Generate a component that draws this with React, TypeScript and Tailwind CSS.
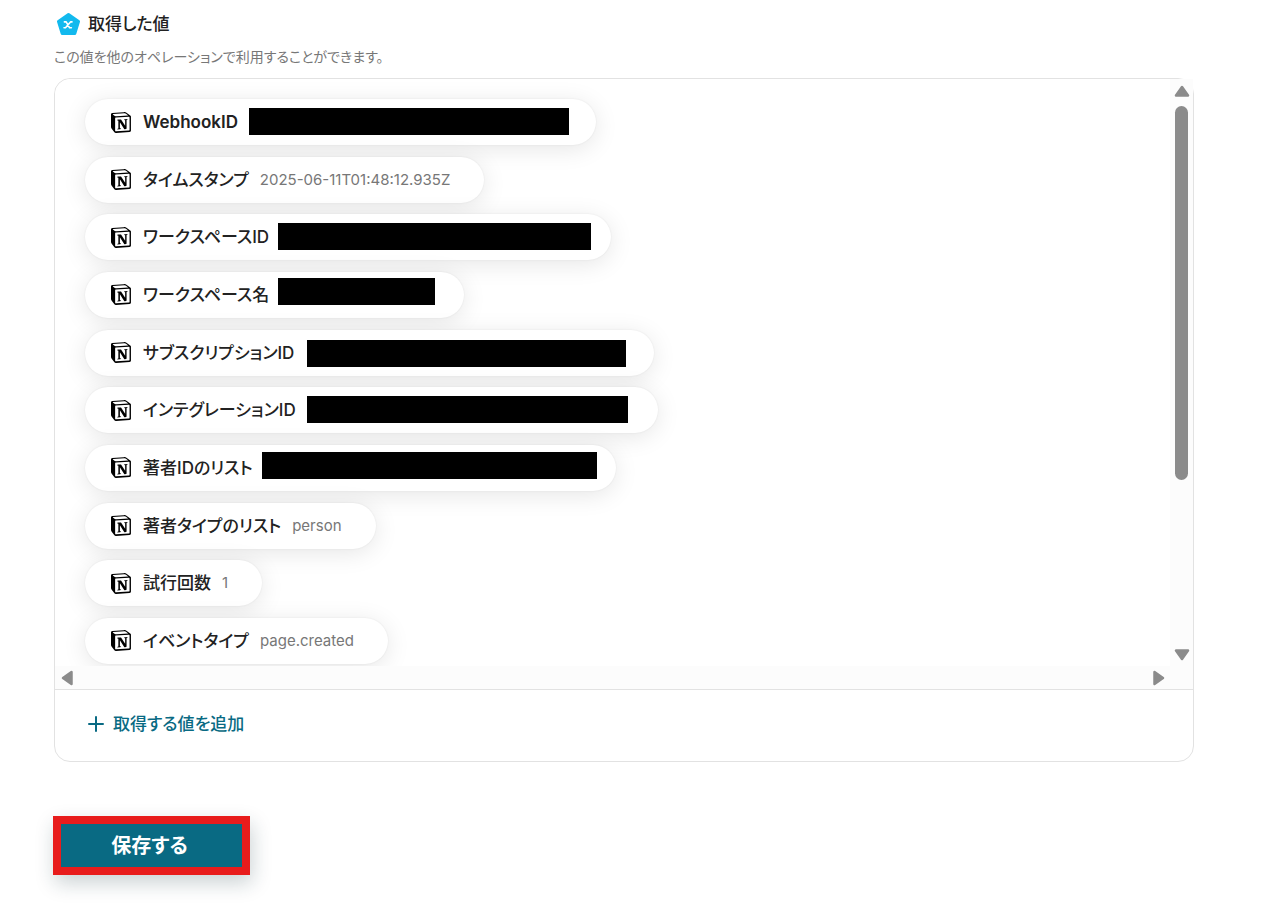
type Value = {
  label: string;
  value?: string;
  pill?: string;
  mask?: string;
};

const values: Value[] = [
  { label: "WebhookID", pill: "w-[511px] font-semibold", mask: "left-[164px] top-[9px] w-[320px]" },
  { label: "タイムスタンプ", value: "2025-06-11T01:48:12.935Z" },
  { label: "ワークスペースID", pill: "w-[526px]", mask: "left-[193px] top-[9px] w-[313px]" },
  { label: "ワークスペース名", pill: "w-[379px]", mask: "left-[193px] top-[6px] w-[157px]" },
  { label: "サブスクリプションID", pill: "w-[569px]", mask: "left-[222px] top-[10px] w-[319px]" },
  { label: "インテグレーションID", pill: "w-[573px]", mask: "left-[222px] top-[9px] w-[321px]" },
  { label: "著者IDのリスト", pill: "w-[531px]", mask: "left-[177px] top-[7px] w-[335px]" },
  { label: "著者タイプのリスト", value: "person" },
  { label: "試行回数", value: "1" },
  { label: "イベントタイプ", value: "page.created" },
];

function NotionIcon() {
  return (
    <svg viewBox="0 0 96 100" className="h-[21px] w-5 shrink-0" aria-hidden="true">
      <path
        fill="#fff"
        d="M6.017 4.313l55.333 -4.087c6.797 -0.583 8.543 -0.19 12.817 2.917l17.663 12.443c2.913 2.14 3.883 2.723 3.883 5.053v68.243c0 4.277 -1.553 6.807 -6.99 7.193L24.467 99.967c-4.08 0.193 -6.023 -0.39 -8.16 -3.113L3.3 79.94c-2.333 -3.113 -3.3 -5.443 -3.3 -8.167V11.113c0 -3.497 1.553 -6.413 6.017 -6.8z"
      />
      <path
        fill="#000"
        fillRule="evenodd"
        d="M61.35 0.227l-55.333 4.087C1.553 4.7 0 7.617 0 11.113v60.66c0 2.723 0.967 5.053 3.3 8.167l13.007 16.913c2.137 2.723 4.08 3.307 8.16 3.113l64.257 -3.89c5.433 -0.387 6.99 -2.917 6.99 -7.193V20.64c0 -2.21 -0.873 -2.847 -3.443 -4.733L74.167 3.143c-4.273 -3.107 -6.02 -3.5 -12.817 -2.917zM25.92 19.523c-5.247 0.353 -6.437 0.433 -9.417 -1.99L8.927 11.507c-0.77 -0.78 -0.383 -1.753 1.557 -1.947l53.193 -3.887c4.467 -0.39 6.793 1.167 8.54 2.527l9.123 6.61c0.39 0.197 1.36 1.36 0.193 1.36l-54.933 3.307 -0.68 0.047zM19.803 88.3V30.367c0 -2.53 0.777 -3.697 3.103 -3.893L86 22.78c2.14 -0.193 3.107 1.167 3.107 3.693v57.547c0 2.53 -0.39 4.67 -3.883 4.863l-60.377 3.5c-3.493 0.193 -5.043 -0.97 -5.043 -4.083zm59.6 -54.827c0.387 1.75 0 3.5 -1.75 3.7l-2.91 0.577v42.773c-2.527 1.36 -4.853 2.137 -6.797 2.137 -3.107 0 -3.883 -0.973 -6.21 -3.887l-19.03 -29.94v28.967l6.02 1.363s0 3.5 -4.857 3.5l-13.39 0.777c-0.39 -0.78 0 -2.723 1.357 -3.11l3.497 -0.97v-38.3L30.48 40.667c-0.39 -1.75 0.58 -4.277 3.3 -4.473l14.367 -0.967 19.8 30.327v-26.83l-5.047 -0.58c-0.39 -2.143 1.163 -3.7 3.103 -3.89l13.4 -0.78z"
      />
    </svg>
  );
}

function VariableIcon() {
  return (
    <svg viewBox="0 0 24 24" className="size-6 shrink-0" aria-hidden="true">
      <path
        d="M12.5 2.6 22.5 9.6 18.8 21.5H6.2L2.5 9.6Z"
        fill="#12b9ee"
        stroke="#12b9ee"
        strokeWidth="3"
        strokeLinejoin="round"
      />
      <path
        d="M8.4 9.9H10.2L13.6 15.8H15.4M16 9.9H14.5L9.5 15.8H8"
        fill="none"
        stroke="#fff"
        strokeWidth="1.6"
        strokeLinecap="round"
        strokeLinejoin="round"
      />
    </svg>
  );
}

function Arrow({ className }: { className: string }) {
  return (
    <svg viewBox="0 0 16 12" className={className} aria-hidden="true">
      <path d="M8 2 14 10.5H2Z" fill="#8b8b8b" stroke="#8b8b8b" strokeWidth="2.5" strokeLinejoin="round" />
    </svg>
  );
}

function Pill({ item }: { item: Value }) {
  return (
    <li
      className={`relative flex h-[46px] items-center rounded-full bg-white pr-[34px] pl-[26px] shadow-[0_0_2px_rgba(0,0,0,0.08),0_4px_24px_rgba(0,0,0,0.1)] ${item.pill ?? ""}`}
    >
      <NotionIcon />
      <span
        className={`ml-3 text-[17px] leading-6 whitespace-nowrap text-[#222] ${item.label === "WebhookID" ? "font-semibold" : "font-medium"}`}
      >
        {item.label}
      </span>
      {item.value && (
        <span className="ml-[11px] text-[15px] leading-6 whitespace-nowrap text-[#777]">{item.value}</span>
      )}
      {item.mask && <span className={`absolute h-[27px] bg-black ${item.mask}`} />}
    </li>
  );
}

export default function App() {
  return (
    <main className="min-h-screen bg-white pt-3 pr-[91px] pb-9 pl-[54px] font-['Inter','Noto_Sans_CJK_JP',sans-serif] [font-feature-settings:'palt']">
      <header>
        <div className="flex h-6 items-center gap-2 pl-[2px]">
          <VariableIcon />
          <h1 className="text-[17px] leading-6 font-medium text-[#222]">取得した値</h1>
        </div>
        <p className="mt-3 text-sm leading-[18px] text-[#777]">
          この値を他のオペレーションで利用することができます。
        </p>
      </header>

      <section className="mt-3 rounded-2xl border border-[#e2e2e2]">
        <div className="flex">
          <ul className="flex h-[587px] min-w-0 flex-1 flex-col items-start justify-between overflow-hidden rounded-tl-2xl bg-white pt-5 pb-[2px] pl-[30px]">
            {values.map((item) => (
              <Pill key={item.label} item={item} />
            ))}
          </ul>
          <div className="flex w-[23px] flex-col items-center bg-[#fcfcfc] pt-[6px] pb-[5px]" aria-hidden="true">
            <Arrow className="h-3 w-4" />
            <div className="mt-[9px] h-[374px] w-[13px] rounded-full bg-[#8b8b8b]" />
            <Arrow className="mt-auto h-3 w-4 rotate-180" />
          </div>
        </div>
        <div
          className="flex h-[23px] items-center justify-between bg-[#fcfcfc] pr-[26px] pl-1"
          aria-hidden="true"
        >
          <Arrow className="h-3 w-4 -rotate-90" />
          <Arrow className="h-3 w-4 rotate-90" />
        </div>
        <div className="border-t border-[#e2e2e2] px-8 pt-[22px] pb-[25px]">
          <button
            type="button"
            className="flex h-6 items-center gap-2 text-[17px] leading-6 font-medium text-[#096a83]"
          >
            <svg viewBox="0 0 18 18" className="size-[18px]" aria-hidden="true">
              <path d="M9 2v14M2 9h14" stroke="currentColor" strokeWidth="2" strokeLinecap="round" />
            </svg>
            取得する値を追加
          </button>
        </div>
      </section>

      <button
        type="button"
        className="mt-[54px] -ml-px flex h-[59px] w-[197px] items-center justify-center border-8 border-[#e81c1c] bg-[#096a83] pr-1 text-xl font-bold text-white shadow-[2px_8px_20px_rgba(20,50,60,0.22)]"
      >
        保存する
      </button>
    </main>
  );
}
